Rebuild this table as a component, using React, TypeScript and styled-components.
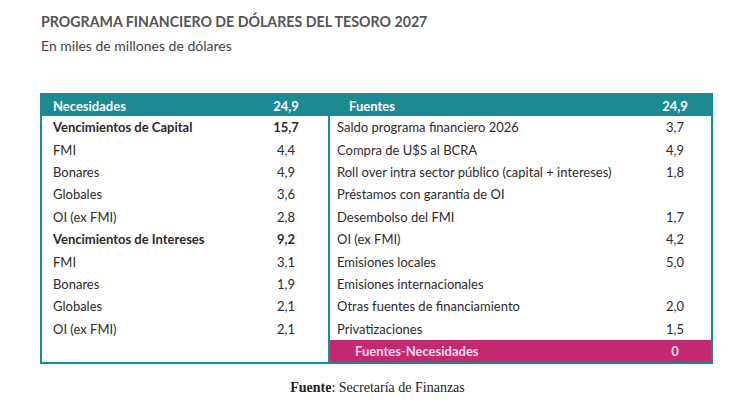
import React from "react";
import styled, { createGlobalStyle } from "styled-components";

const GlobalStyle = createGlobalStyle`
  body {
    margin: 0;
    background: #ffffff;
    font-family: Lato, "Open Sans", sans-serif;
    color: #2b2b2b;
  }
`;

const Page = styled.div`
  width: 755px;
  height: 407px;
  padding: 13px 0 0 41px;
  box-sizing: border-box;
`;

const Title = styled.h1`
  margin: 0;
  font-size: 14.2px;
  font-weight: 700;
  color: #555555;
`;

const Subtitle = styled.div`
  margin-top: 7px;
  font-size: 14px;
  color: #444444;
`;

const Table = styled.div`
  margin-top: 39px;
  width: 673px;
  margin-left: -1px;
  border: 2px solid #1b8a93;
  box-sizing: border-box;
`;

const HeaderRow = styled.div`
  display: grid;
  grid-template-columns: 286px 1fr;
  height: 21px;
  background: #1b8a93;
  color: #ffffff;
`;

const Body = styled.div`
  display: grid;
  grid-template-columns: 286px 1fr;
`;

const Column = styled.div<{ $divider?: boolean }>`
  display: flex;
  flex-direction: column;
  border-left: ${(p) => (p.$divider ? "2px solid #1b8a93" : "none")};
`;

const Cells = styled.div<{ $valueCenter: number; $indent: number }>`
  display: grid;
  grid-template-columns: 1fr 50px;
  align-items: center;
  height: 22.4px;
  padding-left: ${(p) => p.$indent}px;
  padding-right: ${(p) => p.$valueCenter}px;
  font-size: 13px;
`;

const Label = styled.span<{ $bold?: boolean }>`
  font-weight: ${(p) => (p.$bold ? 700 : 400)};
  white-space: nowrap;
`;

const Value = styled.span<{ $bold?: boolean }>`
  text-align: center;
  font-weight: ${(p) => (p.$bold ? 700 : 400)};
`;

const PinkRow = styled(Cells)`
  background: #c4286f;
  color: #f8dcea;
  margin-top: auto;
`;

const Source = styled.div`
  margin-top: 16px;
  width: 673px;
  text-align: center;
  font-family: "Liberation Serif", serif;
  font-size: 14px;
  color: #222222;
  b {
    font-weight: 700;
  }
`;

type Row = { label: string; value: string; bold?: boolean };

const needs: Row[] = [
  { label: "Vencimientos de Capital", value: "15,7", bold: true },
  { label: "FMI", value: "4,4" },
  { label: "Bonares", value: "4,9" },
  { label: "Globales", value: "3,6" },
  { label: "OI (ex FMI)", value: "2,8" },
  { label: "Vencimientos de Intereses", value: "9,2", bold: true },
  { label: "FMI", value: "3,1" },
  { label: "Bonares", value: "1,9" },
  { label: "Globales", value: "2,1" },
  { label: "OI (ex FMI)", value: "2,1" },
];

const sources: Row[] = [
  { label: "Saldo programa financiero 2026", value: "3,7" },
  { label: "Compra de U$S al BCRA", value: "4,9" },
  { label: "Roll over intra sector público (capital + intereses)", value: "1,8" },
  { label: "Préstamos con garantía de OI", value: "" },
  { label: "Desembolso del FMI", value: "1,7" },
  { label: "OI (ex FMI)", value: "4,2" },
  { label: "Emisiones locales", value: "5,0" },
  { label: "Emisiones internacionales", value: "" },
  { label: "Otras fuentes de financiamiento", value: "2,0" },
  { label: "Privatizaciones", value: "1,5" },
];

export default function App() {
  return (
    <Page>
      <GlobalStyle />
      <Title>PROGRAMA FINANCIERO DE DÓLARES DEL TESORO 2027</Title>
      <Subtitle>En miles de millones de dólares</Subtitle>
      <Table>
        <HeaderRow>
          <Cells $indent={11} $valueCenter={17}>
            <Label $bold>Necesidades</Label>
            <Value $bold>24,9</Value>
          </Cells>
          <Cells $indent={21} $valueCenter={11}>
            <Label $bold>Fuentes</Label>
            <Value $bold>24,9</Value>
          </Cells>
        </HeaderRow>
        <Body>
          <Column>
            {needs.map((r, i) => (
              <Cells key={i} $indent={11} $valueCenter={17}>
                <Label $bold={r.bold}>{r.label}</Label>
                <Value $bold={r.bold}>{r.value}</Value>
              </Cells>
            ))}
          </Column>
          <Column $divider>
            {sources.map((r, i) => (
              <Cells key={i} $indent={7} $valueCenter={11}>
                <Label>{r.label}</Label>
                <Value>{r.value}</Value>
              </Cells>
            ))}
            <PinkRow $indent={25} $valueCenter={11}>
              <Label $bold>Fuentes-Necesidades</Label>
              <Value $bold>0</Value>
            </PinkRow>
          </Column>
        </Body>
      </Table>
      <Source>
        <b>Fuente</b>: Secretaría de Finanzas
      </Source>
    </Page>
  );
}
